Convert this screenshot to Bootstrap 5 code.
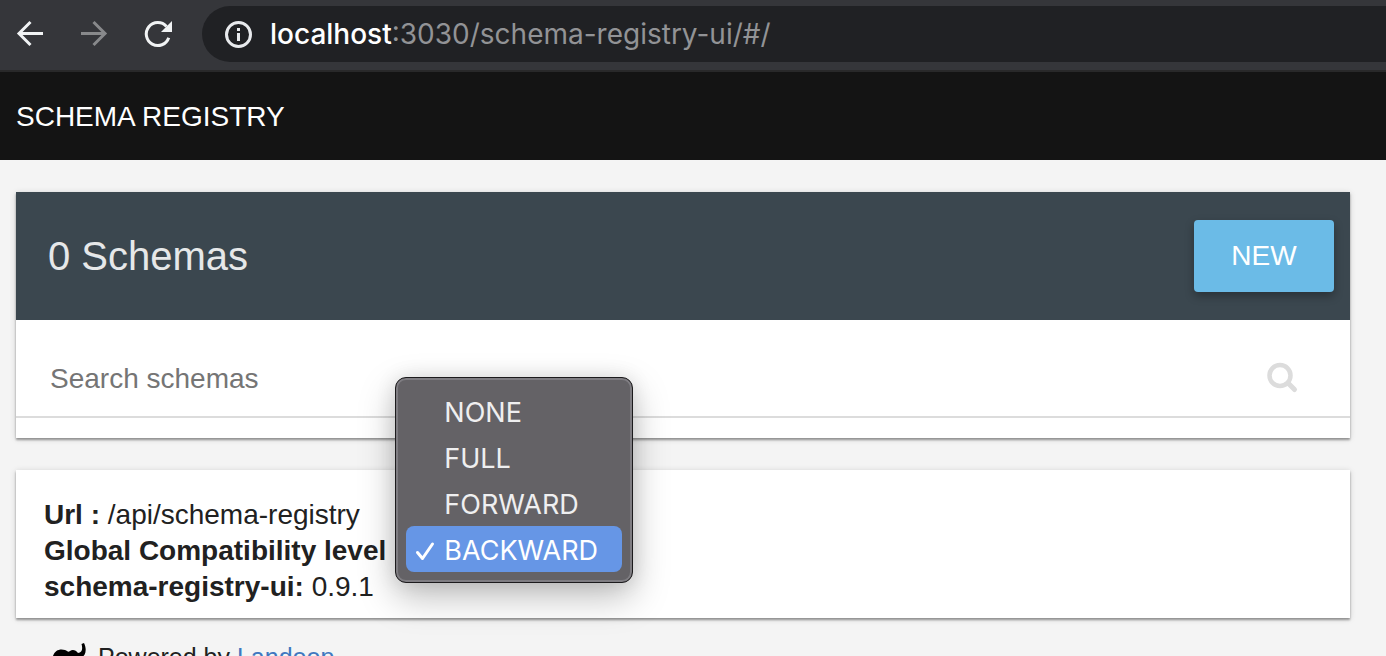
<!DOCTYPE html>
<html lang="en">
<head>
<meta charset="utf-8">
<meta name="viewport" content="width=device-width, initial-scale=1">
<title>Schema Registry UI</title>
<link href="https://cdn.jsdelivr.net/npm/bootstrap@5.3.0/dist/css/bootstrap.min.css" rel="stylesheet">
<style>
  body { background: #f4f4f4; color: #212121; font-family: "Liberation Sans", Arial, sans-serif; font-size: 28px; line-height: 36px; }

  /* Browser toolbar */
  .browser-bar { background: #35363a; height: 72px; border-bottom: 2px solid #29292a; padding: 6px 0 8px 14px; }
  .nav-tools { gap: 32px; }
  .tool-btn, .tool-btn:hover { color: #f1f3f4; line-height: 0; }
  .tool-btn:disabled { color: #88898b; opacity: 1; }
  .address { background: #202124; height: 56px; border-radius: 28px 0 0 28px; padding-left: 22px; gap: 18px; margin-left: 28px; color: #929396; font-family: Inter, "Liberation Sans", sans-serif; font-size: 28px; }
  .address .host { color: #fff; font-weight: 500; }

  /* Application */
  .app-bar { background: #141414; height: 88px; padding: 2px 16px 0; }
  .app-title, .app-title:hover { color: #fff; }
  .page-body { padding: 32px 36px 0 16px; }
  .panel { background: #fff; box-shadow: 0 2px 2px rgba(0,0,0,.34), 0 1px 6px rgba(0,0,0,.16); }
  .panel-top { background: #3b474f; height: 128px; padding: 0 16px 0 32px; }
  .panel-top h1 { font-size: 40px; line-height: 48px; color: #e6e8e9; font-weight: 400; }
  .btn-new, .btn-new:hover { background: #6bbbe7; color: #fff; width: 140px; height: 72px; border: 0; border-radius: 4px; font-size: 28px; box-shadow: 0 4px 10px rgba(0,0,0,.3); }
  .search-row { height: 98px; padding: 20px 50px 0 34px; border-bottom: 2px solid #dcdcdc; }
  .search-row input, .search-row input:focus { border: 0; padding: 2px 0 0; background: transparent; box-shadow: none; font-size: 28px; line-height: 36px; color: #212121; }
  .search-row input::placeholder { color: #757575; opacity: 1; }
  .search-btn { line-height: 0; }
  .panel-foot { height: 20px; }
  .info { margin-top: 32px; padding: 27px 28px 13px; }

  /* Open compatibility menu, laid over the panels */
  .level-menu { left: 100%; bottom: -14px; margin: 0 0 0 9px; width: 238px; padding: 10px; border: 1px solid #1c1b1d; border-radius: 11px; background: #646266; box-shadow: inset 0 0 0 2px #7f7d82, 0 14px 36px rgba(0,0,0,.26), 0 0 20px rgba(0,0,0,.1); font-family: Inter, "Liberation Sans", sans-serif; }
  .level-menu .dropdown-item { height: 46px; padding: 3px 0 0 9px; border-radius: 8px; color: #efeff0; font-size: 27px; }
  .level-menu .dropdown-item.active { background: #6696e6; color: #fff; }
  .tick { width: 29px; line-height: 0; }

  .credits { padding: 21px 36px 16px; font-size: 25px; gap: 12px; }
  .credits a { color: #4078c0; }
</style>
</head>
<body>
<header class="browser-bar d-flex align-items-center">
  <div class="nav-tools d-flex">
    <button type="button" class="btn border-0 p-0 tool-btn" aria-label="Back">
      <svg width="32" height="32" viewBox="0 0 32 32" fill="none" stroke="currentColor" stroke-width="3"><path d="M29 15.500H5M16.500 4L5 15.500L16.500 27"/></svg>
    </button>
    <button type="button" class="btn border-0 p-0 tool-btn" aria-label="Forward" disabled>
      <svg width="32" height="32" viewBox="0 0 32 32" fill="none" stroke="currentColor" stroke-width="3"><path d="M3 15.500H27M15.500 4L27 15.500L15.500 27"/></svg>
    </button>
    <button type="button" class="btn border-0 p-0 tool-btn" aria-label="Reload">
      <svg width="32" height="32" viewBox="0 0 32 32"><path d="M26.700 19.700A11.500 11.500 0 1 1 24.500 8.500" fill="none" stroke="currentColor" stroke-width="3"/><path d="M30 3V14H19Z" fill="currentColor"/></svg>
    </button>
  </div>
  <div class="address d-flex flex-grow-1 align-items-center">
    <svg width="28" height="28" viewBox="0 0 28 28"><circle cx="14.500" cy="14.500" r="12" fill="none" stroke="#e8eaed" stroke-width="3"/><path d="M13 8h3v3h-3zM13 13h3v8h-3z" fill="#e8eaed"/></svg>
    <div><span class="host">localhost</span>:3030/schema-registry-ui/#/</div>
  </div>
</header>

<nav class="app-bar d-flex align-items-center">
  <a class="app-title text-decoration-none" href="#/">SCHEMA REGISTRY</a>
</nav>

<main class="page-body">
  <section class="panel">
    <div class="panel-top d-flex align-items-center justify-content-between">
      <h1 class="m-0">0 Schemas</h1>
      <button type="button" class="btn btn-new">NEW</button>
    </div>
    <form class="search-row d-flex align-items-center">
      <input type="search" class="form-control" placeholder="Search schemas" aria-label="Search schemas">
      <button type="submit" class="btn border-0 p-0 search-btn" aria-label="Search">
        <svg width="36" height="36" viewBox="0 0 36 36" fill="none" stroke="#dcdcdc"><circle cx="16" cy="15.500" r="10.500" stroke-width="4.500"/><path d="M24.500 23.500L30.500 29.500" stroke-width="5" stroke-linecap="round"/></svg>
      </button>
    </form>
    <div class="panel-foot"></div>
  </section>

  <section class="panel info">
    <div><strong>Url :</strong> /api/schema-registry</div>
    <div class="d-flex">
      <div class="dropdown">
        <strong id="level-label">Global Compatibility level</strong>
        <div class="dropdown-menu level-menu show" role="listbox" aria-labelledby="level-label">
          <button type="button" class="dropdown-item d-flex align-items-center" role="option"><span class="tick"></span>NONE</button>
          <button type="button" class="dropdown-item d-flex align-items-center" role="option"><span class="tick"></span>FULL</button>
          <button type="button" class="dropdown-item d-flex align-items-center" role="option"><span class="tick"></span>FORWARD</button>
          <button type="button" class="dropdown-item d-flex align-items-center active" role="option" aria-selected="true"><span class="tick"><svg width="20" height="20" viewBox="0 0 20 20" fill="none" stroke="#fff" stroke-width="3" stroke-linecap="round" stroke-linejoin="round"><path d="M2.500 11.500L7.500 17.500L17.500 3"/></svg></span>BACKWARD</button>
        </div>
      </div>
    </div>
    <div><strong>schema-registry-ui:</strong> 0.9.1</div>
  </section>

  <footer class="credits d-flex align-items-center">
    <svg width="34" height="30" viewBox="0 0 34 30"><path d="M1 14C3 8 8 6.500 13 8C15.500 9 16 10.500 18 9C21 7 24 8.500 26 11C30 11 31 7 29.500 2L32 1C35 7 34 14 29 16C28 20 26 22 24 23V29H19V23H9V29H4V20C2 19 1 17 1 14Z" fill="#000"/></svg>
    <div>Powered by <a class="text-decoration-none" href="#/">Landoop</a></div>
  </footer>
</main>
<script src="https://cdn.jsdelivr.net/npm/bootstrap@5.3.0/dist/js/bootstrap.bundle.min.js"></script>
</body>
</html>
